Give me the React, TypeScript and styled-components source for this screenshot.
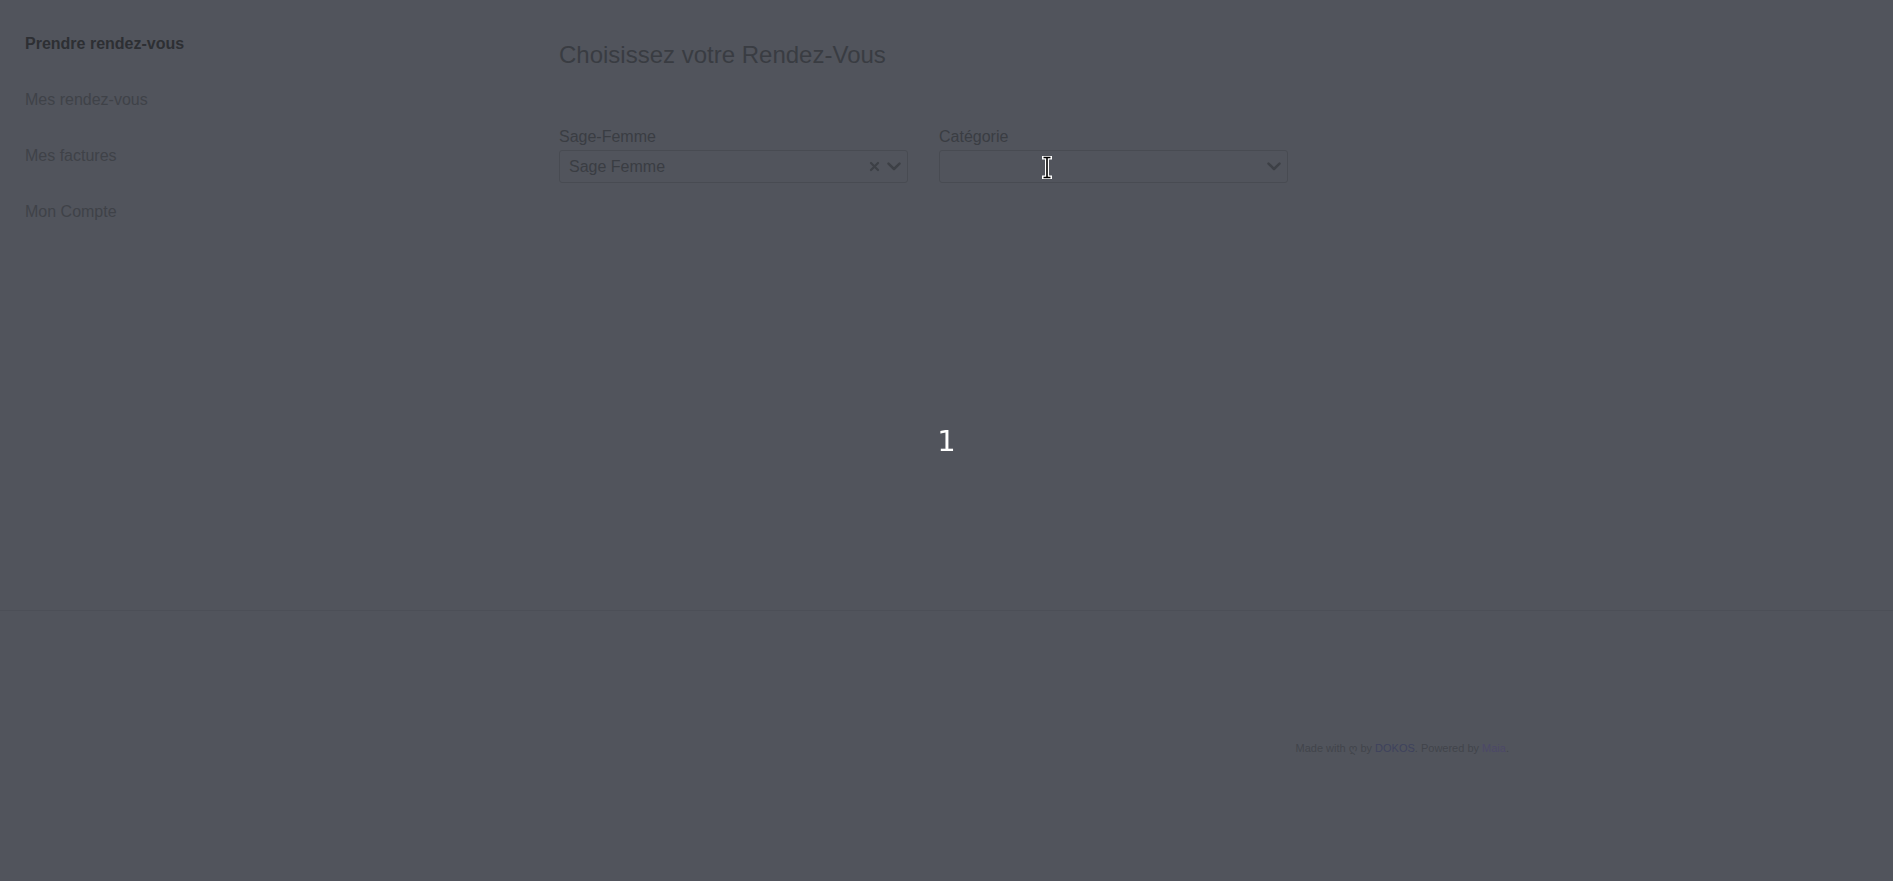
import React from "react";
import styled, { createGlobalStyle } from "styled-components";

const GlobalStyle = createGlobalStyle`
  html, body {
    margin: 0;
    padding: 0;
    background: #51545c;
  }
  body {
    font-family: "Liberation Sans", Arial, sans-serif;
    color: #3a3d43;
  }
  * { box-sizing: border-box; }
`;

const Page = styled.div`
  min-height: 881px;
  background: #51545c;
  display: flex;
  flex-direction: column;
`;

const Body = styled.div`
  display: grid;
  grid-template-columns: 559px 1fr;
  height: 611px;
  border-bottom: 1px solid #4c4f57;
`;

const Sidebar = styled.nav`
  display: flex;
  flex-direction: column;
  padding: 16px 0 0 25px;
`;

const NavItem = styled.a<{ $active?: boolean }>`
  display: block;
  font-size: 16px;
  line-height: 20px;
  padding: 18px 0;
  color: ${(p) => (p.$active ? "#2d2f33" : "#3f4248")};
  font-weight: ${(p) => (p.$active ? 700 : 400)};
  text-decoration: none;
`;

const Main = styled.main`
  padding-top: 40px;
  display: flex;
  flex-direction: column;
`;

const Title = styled.h1`
  margin: 0;
  font-size: 24px;
  line-height: 29px;
  font-weight: 400;
  color: #393c42;
`;

const FormRow = styled.div`
  display: grid;
  grid-template-columns: 349px 349px;
  column-gap: 31px;
  margin-top: 57px;
`;

const Field = styled.div`
  display: flex;
  flex-direction: column;
`;

const Label = styled.label`
  font-size: 16px;
  line-height: 22px;
  color: #3a3d43;
  margin-bottom: 2px;
`;

const SelectBox = styled.div`
  position: relative;
  height: 33px;
  border: 1px solid #484b52;
  border-radius: 3px;
  display: flex;
  align-items: center;
  padding: 0 6px 0 9px;
`;

const SelectValue = styled.span`
  flex: 1;
  font-size: 16px;
  color: #3a3d43;
`;

const Indicators = styled.span`
  display: flex;
  align-items: center;
  gap: 7px;
  color: #3d4046;
`;

const Cursor = styled.svg`
  position: absolute;
  left: 102px;
  top: 5px;
`;

const Overlay = styled.div`
  position: fixed;
  inset: 0;
  display: flex;
  align-items: center;
  justify-content: center;
  pointer-events: none;
`;

const Counter = styled.span`
  font-family: "DejaVu Sans", sans-serif;
  font-size: 29px;
  color: #ffffff;
`;

const Footer = styled.footer`
  display: flex;
  justify-content: flex-end;
  padding: 130px 384px 0 0;
`;

const FooterText = styled.p`
  margin: 0;
  font-size: 11px;
  line-height: 15px;
  color: #41444b;
`;

const FooterLink = styled.a<{ $tone: "blue" | "purple" }>`
  color: ${(p) => (p.$tone === "blue" ? "#3e425c" : "#4c4868")};
  text-decoration: none;
`;

const Heart = styled.span`
  font-family: "DejaVu Sans", sans-serif;
`;

const ClearIcon = () => (
  <svg width="11" height="11" viewBox="0 0 11 11">
    <path d="M2 2 L9 9 M9 2 L2 9" stroke="currentColor" strokeWidth="2.2" strokeLinecap="round" />
  </svg>
);

const Chevron = () => (
  <svg width="14" height="9" viewBox="0 0 14 9">
    <path d="M1.5 1.6 L7 7 L12.5 1.6" stroke="currentColor" strokeWidth="2.5" fill="none" strokeLinecap="round" strokeLinejoin="round" />
  </svg>
);

export default function App() {
  return (
    <>
      <GlobalStyle />
      <Page>
        <Body>
          <Sidebar>
            <NavItem $active>Prendre rendez-vous</NavItem>
            <NavItem>Mes rendez-vous</NavItem>
            <NavItem>Mes factures</NavItem>
            <NavItem>Mon Compte</NavItem>
          </Sidebar>
          <Main>
            <Title>Choisissez votre Rendez-Vous</Title>
            <FormRow>
              <Field>
                <Label>Sage-Femme</Label>
                <SelectBox>
                  <SelectValue>Sage Femme</SelectValue>
                  <Indicators>
                    <ClearIcon />
                    <Chevron />
                  </Indicators>
                </SelectBox>
              </Field>
              <Field>
                <Label>Catégorie</Label>
                <SelectBox>
                  <SelectValue />
                  <Indicators>
                    <Chevron />
                  </Indicators>
                  <Cursor width="10" height="23" viewBox="0 0 10 23">
                    <path
                      d="M1.5 1.5 H8.5 M5 1.5 V21.5 M1.5 21.5 H8.5"
                      stroke="#ffffff"
                      strokeWidth="4"
                      strokeLinecap="square"
                      fill="none"
                    />
                    <path
                      d="M1.5 1.5 H8.5 M5 1.5 V21.5 M1.5 21.5 H8.5"
                      stroke="#000000"
                      strokeWidth="1.6"
                      fill="none"
                    />
                  </Cursor>
                </SelectBox>
              </Field>
            </FormRow>
          </Main>
        </Body>
        <Footer>
          <FooterText>
            Made with <Heart>ღ</Heart> by <FooterLink $tone="blue">DOKOS</FooterLink>. Powered by{" "}
            <FooterLink $tone="purple">Maia</FooterLink>.
          </FooterText>
        </Footer>
        <Overlay>
          <Counter>1</Counter>
        </Overlay>
      </Page>
    </>
  );
}
